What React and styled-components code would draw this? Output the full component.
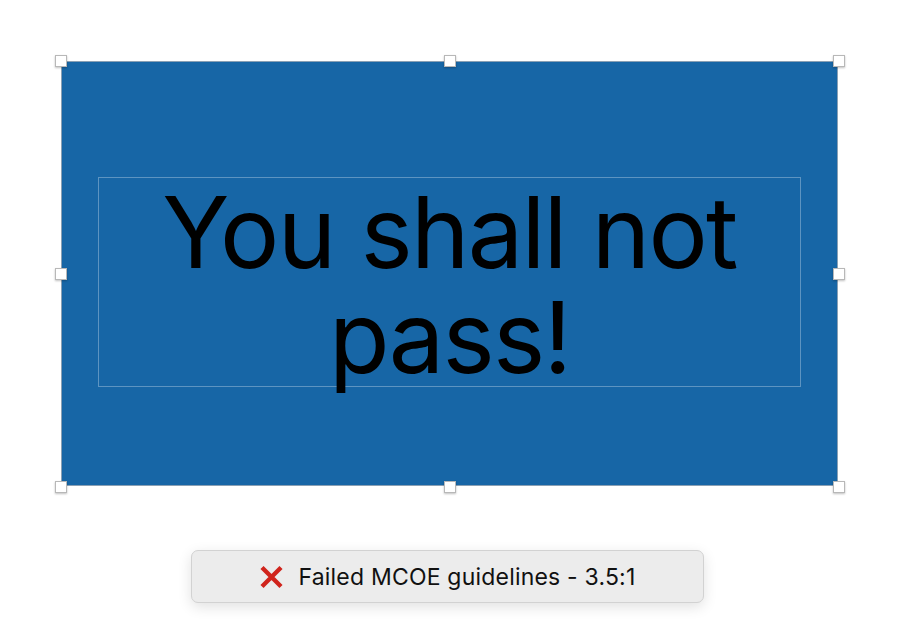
import React from 'react';
import styled, { createGlobalStyle } from 'styled-components';

const GlobalStyle = createGlobalStyle`
	html, body { margin: 0; padding: 0; background: #ffffff; }
	body { font-family: 'Inter', 'Roboto', sans-serif; width: 900px; height: 640px; overflow: hidden; }
`;

const Page = styled.div`
	display: flex;
	flex-direction: column;
	align-items: flex-start;
	padding: 61px 0 0 61px;
`;

const Frame = styled.div`
	position: relative;
	box-sizing: border-box;
	width: 777px;
	height: 425px;
	background: #1766a6;
	border: 1px solid #8aa0b4;
	display: flex;
	align-items: flex-start;
	justify-content: center;
	padding-top: 115px;
`;

const Handle = styled.span`
	position: absolute;
	width: 12px;
	height: 12px;
	box-sizing: border-box;
	background: #ffffff;
	border: 1px solid #b8b8b8;
	box-shadow: 0 1px 2px rgba(0, 0, 0, 0.25);
	left: ${(p) => p.$x}px;
	top: ${(p) => p.$y}px;
`;

const TextBox = styled.div`
	box-sizing: border-box;
	width: 703px;
	height: 210px;
	border: 1px solid rgba(255, 255, 255, 0.3);
	display: flex;
	justify-content: center;
	align-items: flex-start;
`;

const Headline = styled.div`
	font-family: 'Inter', sans-serif;
	font-size: 99px;
	line-height: 105px;
	font-weight: 400;
	letter-spacing: -1.8px;
	color: #000000;
	text-align: center;
	margin-top: 2px;
`;

const Toast = styled.div`
	margin-top: 64px;
	margin-left: 130px;
	box-sizing: border-box;
	width: 513px;
	height: 53px;
	background: #ececec;
	border: 1px solid #d2d2d2;
	border-radius: 7px;
	box-shadow: 0 4px 14px rgba(0, 0, 0, 0.12);
	display: flex;
	align-items: center;
	justify-content: center;
	gap: 14px;
	font-family: 'Inter', sans-serif;
	font-size: 23px;
	letter-spacing: 0.2px;
	color: #111111;
`;

const handles = [
	[-7, -7], [382, -7], [771, -7],
	[-7, 206], [771, 206],
	[-7, 419], [382, 419], [771, 419]
];

function CrossIcon() {
	return (
		<svg width="25" height="24" viewBox="0 0 25 24">
			<path d="M3 2.5 L22 21.5 M22 2.5 L3 21.5" stroke="#d0241c" strokeWidth="4.4" strokeLinecap="butt" />
		</svg>
	);
}

export default function App() {
	return (
		<Page>
			<GlobalStyle />
			<Frame>
				{handles.map(([x, y], i) => (
					<Handle key={i} $x={x} $y={y} />
				))}
				<TextBox>
					<Headline>
						You shall not
						<br />
						pass!
					</Headline>
				</TextBox>
			</Frame>
			<Toast>
				<CrossIcon />
				<span>Failed MCOE guidelines - 3.5:1</span>
			</Toast>
		</Page>
	);
}
